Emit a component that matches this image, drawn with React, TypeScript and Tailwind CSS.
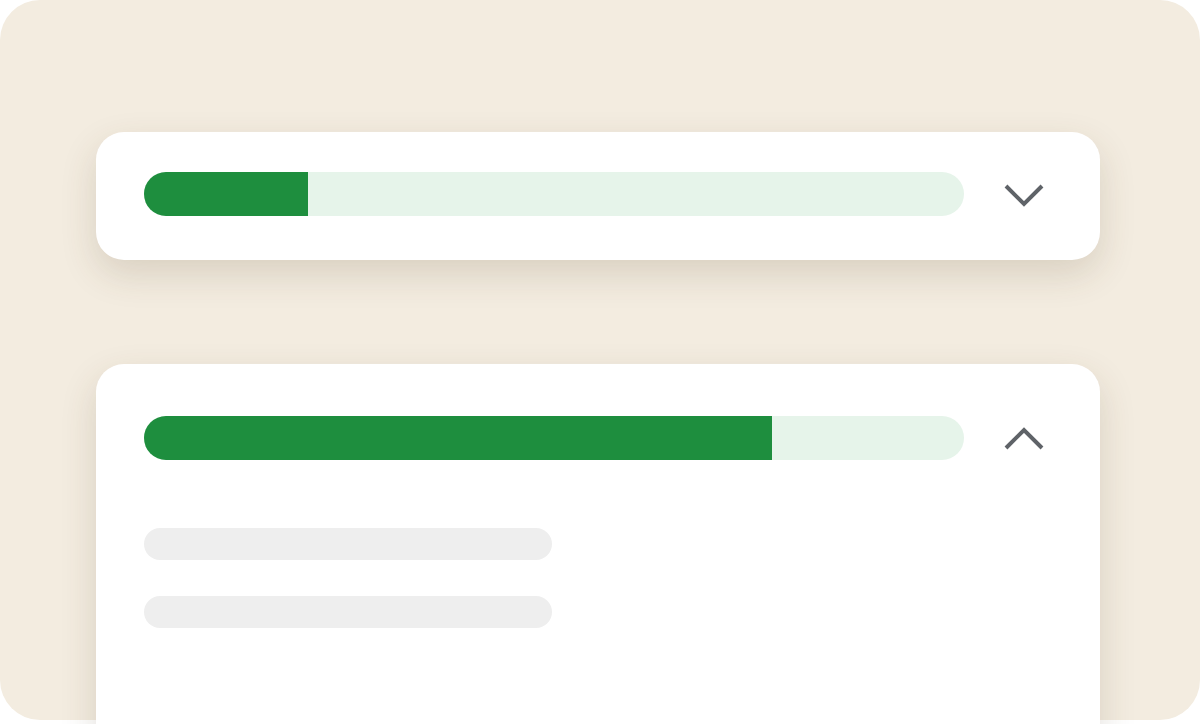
import React from "react";

function Chevron({ up }: { up?: boolean }) {
  return (
    <svg width="40" height="24" viewBox="0 0 40 24" className="block">
      <polyline
        points={up ? "2,21 20,3 38,21" : "2,3 20,21 38,3"}
        fill="none"
        stroke="#5f6368"
        strokeWidth="4"
      />
    </svg>
  );
}

function Bar({ pct }: { pct: number }) {
  return (
    <div className="h-[44px] w-[820px] rounded-full bg-[#e6f4ea] overflow-hidden">
      <div className="h-full bg-[#1e8e3e]" style={{ width: `${pct}px` }} />
    </div>
  );
}

export default function App() {
  return (
    <div className="w-[1200px] h-[724px] overflow-hidden bg-white">
      <div className="w-[1200px] h-[720px] rounded-[40px] bg-[#f3ece0] pt-[132px] px-[96px]">
        <div className="w-[1004px] h-[128px] rounded-[28px] bg-white shadow-[0_14px_36px_rgba(80,60,30,0.16)] pl-[48px] pt-[40px] flex items-start">
          <Bar pct={164} />
          <div className="ml-[40px] mt-[11px]">
            <Chevron />
          </div>
        </div>
        <div className="w-[1004px] mt-[104px] h-[400px] rounded-[28px] bg-white shadow-[0_14px_36px_rgba(80,60,30,0.16)] pl-[48px] pt-[52px]">
          <div className="flex items-start">
            <Bar pct={628} />
            <div className="ml-[40px] mt-[11px]">
              <Chevron up />
            </div>
          </div>
          <div className="mt-[68px] flex flex-col gap-[36px]">
            <div className="h-[32px] w-[408px] rounded-full bg-[#eeeeee]" />
            <div className="h-[32px] w-[408px] rounded-full bg-[#eeeeee]" />
          </div>
        </div>
      </div>
    </div>
  );
}
